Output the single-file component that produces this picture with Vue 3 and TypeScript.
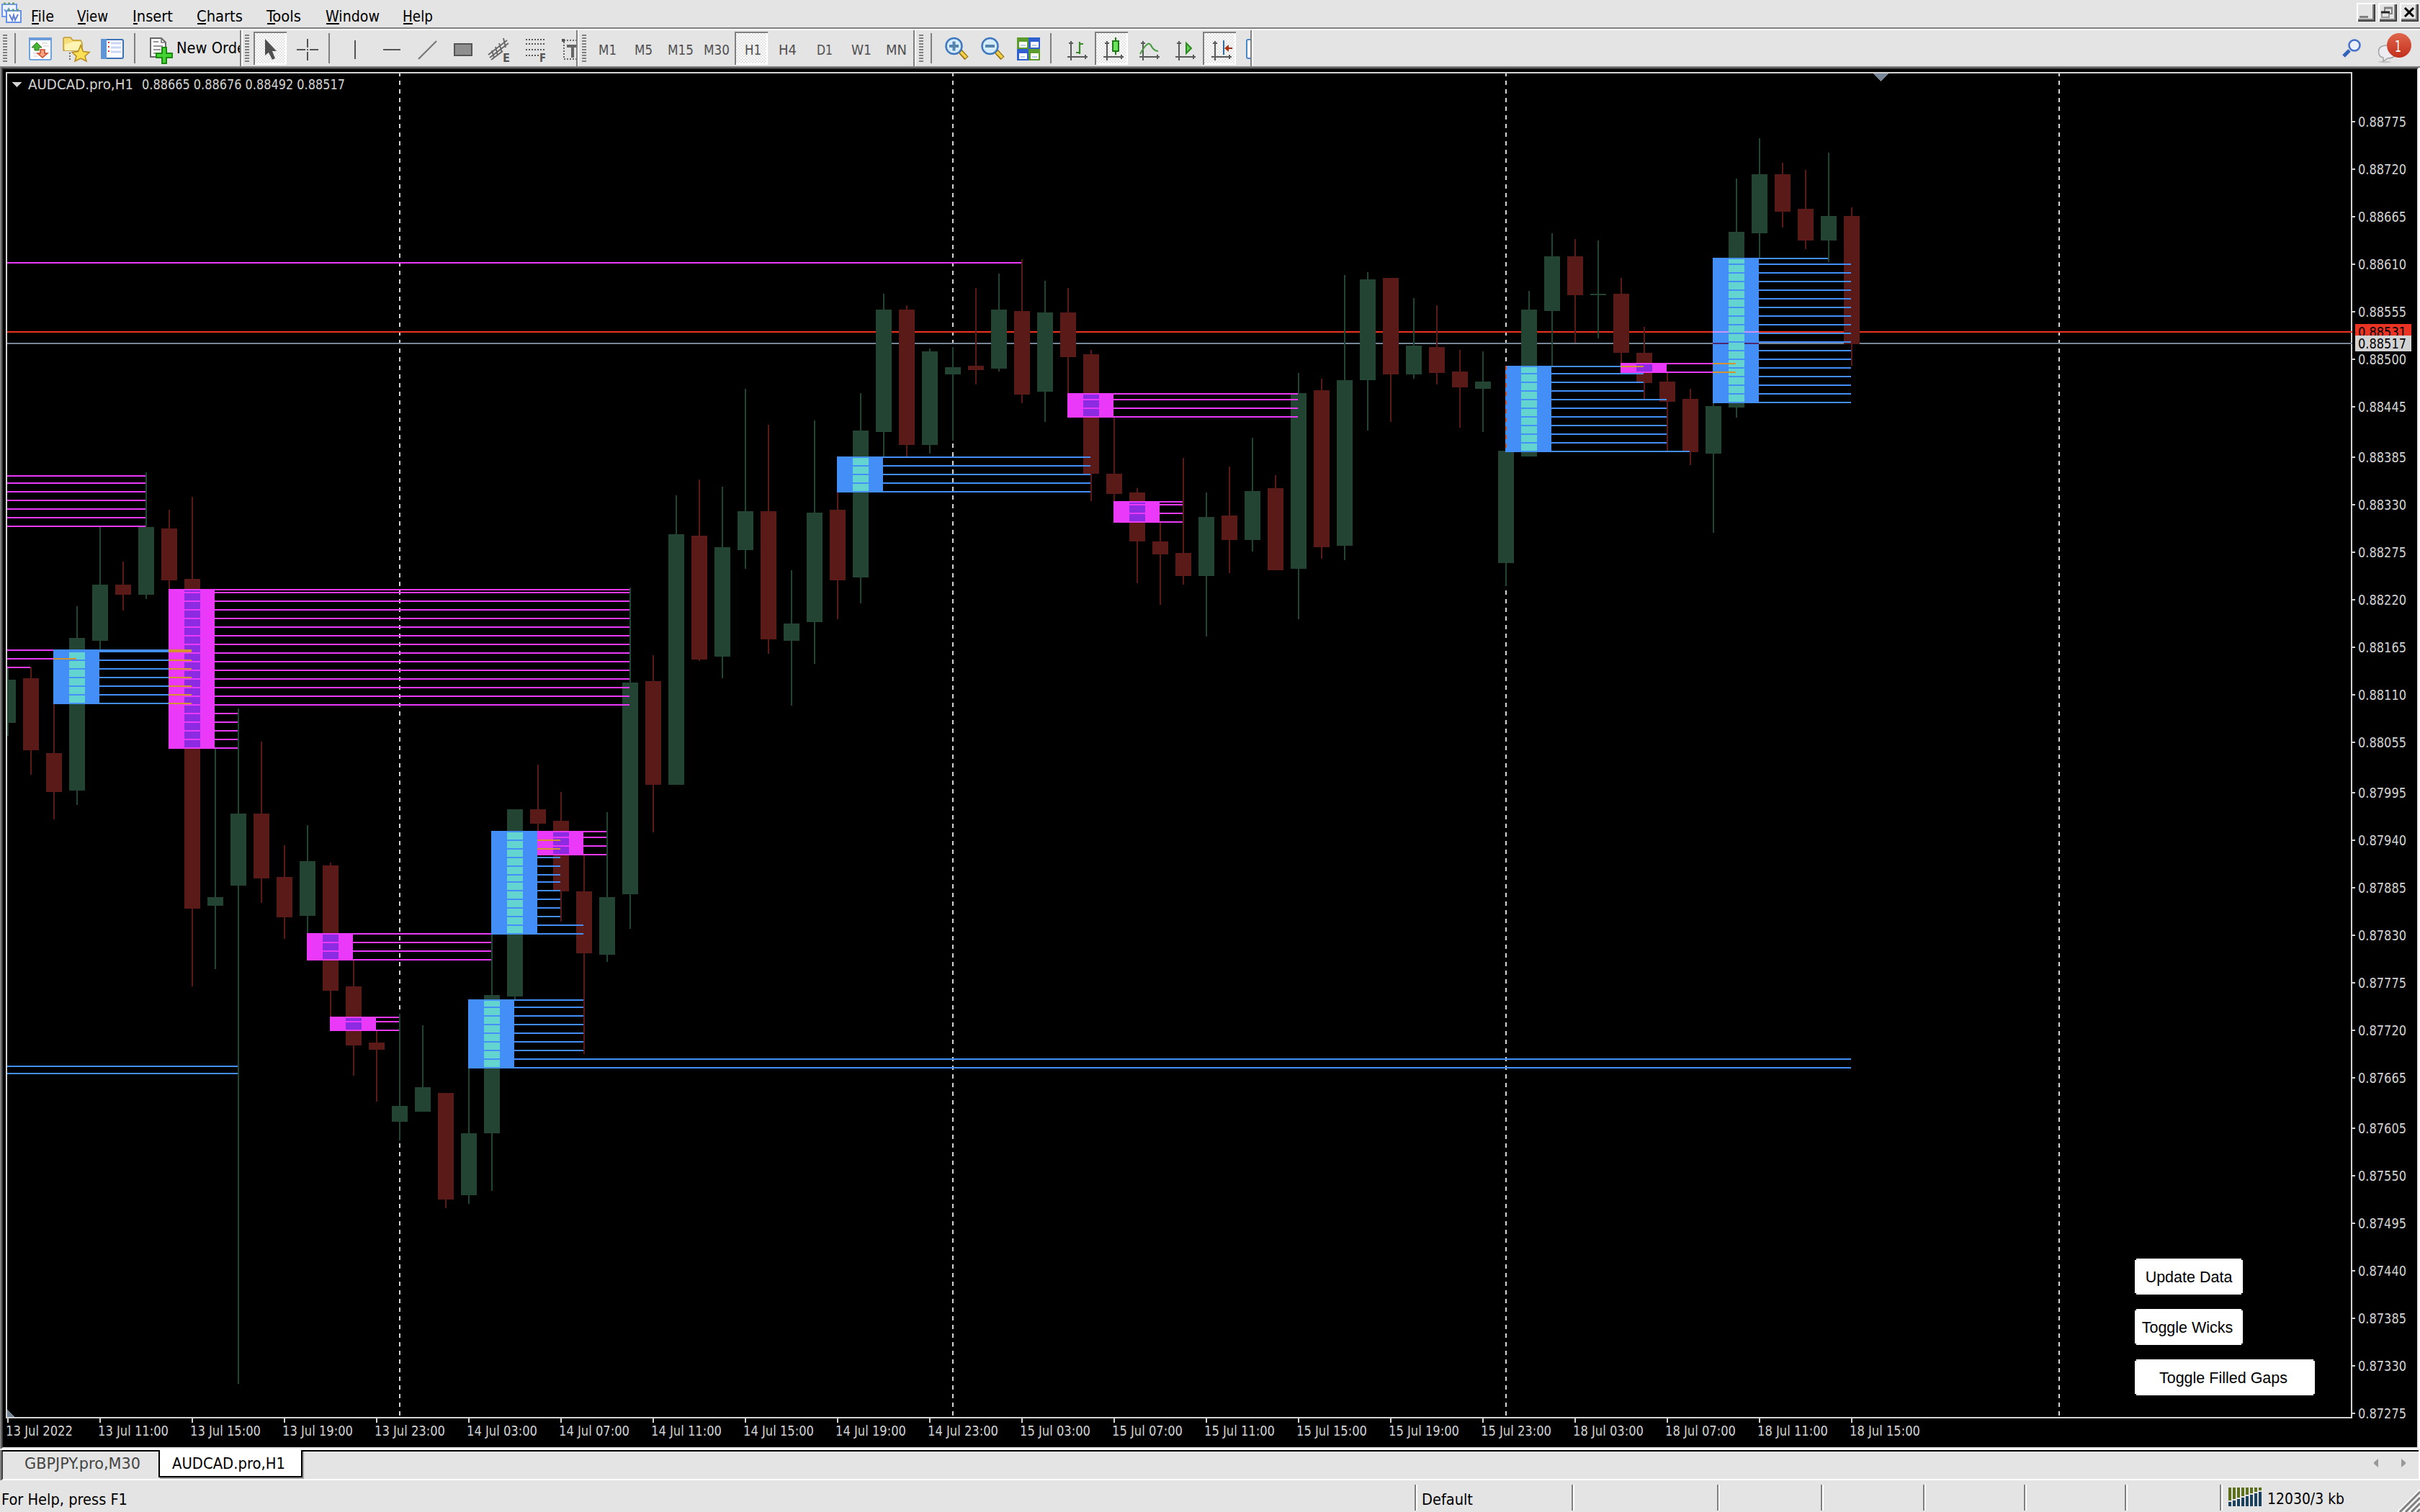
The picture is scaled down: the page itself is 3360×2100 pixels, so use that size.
<script setup lang="ts">
type Candle = [dir: 'g' | 'r', high: number, top: number, bottom: number, low: number]
type Tone = 'm' | 'b'
interface Gap { n: number; tone: Tone; top: number; bottom: number; levels: [y: number, end: number][] }

const GREEN = '#234433'
const RED = '#5a1a18'

const candles: Candle[] = [
  ['g', 928, 944, 1004, 1022], ['r', 926, 942, 1042, 1076], ['r', 978, 1046, 1100, 1138], ['g', 842, 886, 1098, 1118],
  ['g', 732, 812, 890, 904], ['r', 780, 812, 826, 848], ['g', 656, 732, 826, 832], ['r', 708, 734, 806, 818],
  ['r', 690, 804, 1262, 1370], ['g', 1040, 1246, 1258, 1346], ['g', 984, 1130, 1230, 1922], ['r', 1030, 1130, 1220, 1254],
  ['r', 1174, 1218, 1274, 1304], ['g', 1146, 1196, 1272, 1298], ['r', 1198, 1202, 1376, 1412], ['r', 1334, 1370, 1452, 1494],
  ['r', 1432, 1448, 1458, 1530], ['g', 1408, 1536, 1558, 1584], ['g', 1424, 1510, 1544, 1544], ['r', 1518, 1518, 1666, 1678],
  ['g', 1484, 1574, 1660, 1672], ['g', 1298, 1382, 1574, 1654], ['g', 1124, 1124, 1384, 1390], ['r', 1062, 1124, 1144, 1154],
  ['r', 1100, 1140, 1238, 1280], ['r', 1188, 1238, 1324, 1464], ['g', 1128, 1246, 1326, 1336], ['g', 816, 948, 1242, 1290],
  ['r', 910, 946, 1090, 1156], ['g', 688, 742, 1090, 1090], ['r', 666, 744, 916, 918], ['g', 676, 760, 912, 942],
  ['g', 540, 710, 764, 790], ['r', 590, 710, 888, 908], ['g', 792, 866, 890, 980], ['g', 584, 712, 864, 922],
  ['r', 684, 708, 806, 860], ['g', 546, 598, 802, 838], ['g', 408, 430, 600, 634], ['r', 424, 430, 618, 634],
  ['g', 484, 488, 618, 630], ['g', 482, 510, 520, 612], ['r', 400, 508, 514, 534], ['g', 380, 430, 512, 516],
  ['r', 360, 432, 548, 560], ['g', 390, 434, 544, 586], ['r', 400, 434, 496, 546], ['r', 486, 492, 658, 696],
  ['r', 580, 658, 686, 696], ['r', 678, 684, 752, 810], ['r', 726, 752, 770, 840], ['r', 636, 768, 800, 812],
  ['g', 684, 718, 800, 884], ['r', 648, 716, 750, 796], ['g', 608, 682, 750, 766], ['r', 660, 678, 792, 792],
  ['g', 518, 546, 790, 860], ['r', 526, 542, 760, 776], ['g', 382, 528, 758, 778], ['g', 378, 388, 528, 598],
  ['r', 386, 386, 520, 586], ['g', 414, 480, 520, 526], ['r', 424, 482, 518, 534], ['r', 486, 516, 538, 594],
  ['g', 488, 530, 540, 600], ['g', 626, 626, 782, 814], ['g', 404, 430, 634, 634], ['g', 324, 356, 432, 508],
  ['r', 332, 356, 410, 476], ['g', 334, 408, 410, 470], ['r', 386, 408, 490, 504], ['r', 454, 490, 532, 554],
  ['r', 518, 530, 558, 626], ['r', 540, 554, 628, 646], ['g', 560, 564, 630, 740], ['g', 248, 322, 566, 580],
  ['g', 192, 242, 324, 358], ['r', 226, 242, 294, 316], ['r', 236, 290, 334, 346], ['g', 212, 300, 334, 364],
  ['r', 288, 300, 478, 508],
]

const to = (ys: number[], end: number): [number, number][] => ys.map((y) => [y, end])

const gaps: Gap[] = [
  { n: 3, tone: 'b', top: 902, bottom: 978, levels: to([902, 904, 916, 928, 940, 952, 964, 976], 266) },
  { n: 8, tone: 'm', top: 818, bottom: 1040, levels: [...to([818, 822, 834, 846, 858, 870, 882, 894, 906, 918, 930, 942, 954, 966, 978], 874), ...to([990, 1002, 1014, 1026, 1038], 330)] },
  { n: 14, tone: 'm', top: 1296, bottom: 1334, levels: to([1296, 1308, 1320, 1332], 682) },
  { n: 15, tone: 'm', top: 1412, bottom: 1432, levels: to([1412, 1418, 1430], 554) },
  { n: 21, tone: 'b', top: 1388, bottom: 1484, levels: [...to([1388, 1398, 1410, 1422, 1434, 1446, 1458], 810), ...to([1470, 1482], 2570)] },
  { n: 22, tone: 'b', top: 1154, bottom: 1298, levels: [...to([1154, 1166, 1178, 1190, 1202, 1214, 1224, 1236, 1248, 1260, 1272], 778), ...to([1284, 1296], 810)] },
  { n: 24, tone: 'm', top: 1154, bottom: 1188, levels: to([1154, 1162, 1174, 1186], 842) },
  { n: 37, tone: 'b', top: 634, bottom: 684, levels: to([634, 646, 658, 670, 682], 1514) },
  { n: 47, tone: 'm', top: 546, bottom: 580, levels: to([546, 554, 566, 578], 1802) },
  { n: 49, tone: 'm', top: 696, bottom: 726, levels: to([696, 700, 712, 724], 1642) },
  { n: 66, tone: 'b', top: 508, bottom: 628, levels: [...to([508, 518, 530, 542], 2282), ...to([554, 566, 578, 590, 602, 614], 2314), [626, 2346]] },
  { n: 71, tone: 'm', top: 504, bottom: 518, levels: to([504, 516], 2410) },
  { n: 75, tone: 'b', top: 358, bottom: 560, levels: [[358, 2538], ...to([366, 378, 390, 402, 414, 426, 438, 450, 462, 474, 486, 498, 510, 522, 534, 546, 558], 2570)] },
]

// levels whose originating candle lies left of the visible range
const looseLevels: [Tone, number, number][] = [
  ['m', 364, 1418],
  ...[660, 670, 682, 694, 706, 718, 730].map((y): [Tone, number, number] => ['m', y, 202]),
  ['m', 902, 74], ['m', 914, 106], ['m', 926, 42], ['b', 1480, 330], ['b', 1490, 330],
]

// crossings of two zones are drawn inverted
type Crossing = [x: number, y: number, w: number, h: number, color: string]
const AMBER = '#d6922f'
const crossings: Crossing[] = [
  [74, 914, 32, 2, AMBER], [234, 902, 32, 4, AMBER],
  ...[916, 928, 940, 952, 964, 976].map((y): Crossing => [234, y, 32, 2, AMBER]),
  [746, 1166, 32, 2, AMBER], [746, 1178, 32, 2, AMBER],
  [2250, 508, 32, 2, AMBER], [2378, 504, 32, 2, AMBER], [2378, 516, 32, 2, AMBER],
  [2378, 460, 22, 2, '#cf93f5'], [2422, 460, 20, 2, '#cf93f5'],
  [2378, 476, 22, 2, '#50266f'], [2422, 476, 20, 2, '#50266f'],
]

const tone = { m: '#ea39f8', b: '#448ef8' }
const core = { m: '#8c2be2', b: '#63d4cf' }
const cx = (n: number) => 11 + 32 * n
const fill = (c: Candle) => (c[0] === 'g' ? GREEN : RED)

const sessions = [555, 1323, 2091, 2859]

const prices: [string, number][] = []
{
  let y = 169
  for (let p = 88775; p >= 87275;) {
    prices.push([`0.${p}`, y])
    const wide = p === 88445 || p === 88055 || p === 87665
    p -= wide ? 60 : 55
    y += wide ? 70 : 66
  }
}

const times: string[] = ['13 Jul 2022', '13 Jul 11:00', '13 Jul 15:00', '13 Jul 19:00', '13 Jul 23:00']
for (const day of ['14', '15', '18']) {
  for (const h of ['03', '07', '11', '15', '19', '23']) {
    if (times.length < 21) times.push(`${day} Jul ${h}:00`)
  }
}

const menu: [label: string, x: number, w: number, accel: number][] = [
  ['File', 43, 32, 10], ['View', 107, 43, 11], ['Insert', 184, 56, 6], ['Charts', 273, 64, 12],
  ['Tools', 370, 48, 11], ['Window', 452, 75, 18], ['Help', 559, 42, 13],
]
const menuCells = menu.map(([label, x, w, accel], i) => ({
  label, w, accel, gap: x - (i ? menu[i - 1][1] + menu[i - 1][2] : 32),
}))

const periods: [string, number, number][] = [
  ['M1', 831, 25], ['M5', 881, 25], ['M15', 927, 36], ['M30', 977, 36], ['H1', 1034, 23],
  ['H4', 1081, 25], ['D1', 1134, 22], ['W1', 1182, 28], ['MN', 1230, 29],
]

const bars = [0, 1, 2, 3, 4, 5, 6, 7]
const statusCells = [1966, 218, 202, 144, 142, 140, 140, 132]
</script>

<template>
  <div class="app">
    <header class="menubar">
      <svg class="menu-icon" width="32" height="38" viewBox="0 0 32 38">
        <rect x="3" y="6" width="20" height="17" fill="#eef3ff" stroke="#6f97ea" stroke-width="2" />
        <path d="M5 5h3M11 5h3M17 5h3" stroke="#69a07a" stroke-width="3" />
        <path d="M6 13l3 4 3-5 3 6 3-5" fill="none" stroke="#6f97ea" stroke-width="2" />
        <rect x="9" y="15" width="20" height="16" fill="#fff" stroke="#6590e8" stroke-width="2" />
        <path d="M11 14h3M17 14h3M23 14h3" stroke="#69a07a" stroke-width="3" />
        <path d="M13 20l4 8 2-7 2 7 4-8" fill="none" stroke="#5f7fd8" stroke-width="2" />
      </svg>
      <svg
        v-for="m in menuCells" :key="m.label" class="menu-item" :width="m.w" height="38"
        :style="{ marginLeft: m.gap + 'px' }"
      >
        <text x="0" y="30" class="t22" :textLength="m.w" lengthAdjust="spacingAndGlyphs">{{ m.label }}</text>
        <rect x="1" y="32" :width="m.accel" height="2" fill="#000" />
      </svg>
      <div class="win-buttons">
        <svg width="26" height="26"><rect x="4" y="18" width="12" height="3" fill="#808080" /></svg>
        <svg width="26" height="26">
          <path d="M9 12V7H19V15H16" fill="none" stroke="#808080" stroke-width="2" /><path d="M8 7H20" stroke="#808080" stroke-width="3" />
          <rect x="5" y="13" width="10" height="7" fill="none" stroke="#999" stroke-width="2" /><path d="M4 13H16" stroke="#222" stroke-width="3" />
        </svg>
        <svg width="26" height="26"><path d="M7 7L19 19M19 7L7 19" stroke="#000" stroke-width="3" /></svg>
      </div>
    </header>

    <div class="toolbar">
      <svg width="337" height="50" viewBox="0 42 337 50" class="band">
        <path d="M7 48V88" class="grip" />
        <path d="M21 46V88M187 46V88" class="sep" />
        <!-- market watch -->
        <rect x="41" y="53" width="30" height="30" rx="2" fill="#fff" stroke="#6fa3dd" stroke-width="2" />
        <rect x="40" y="52" width="32" height="4" fill="#6b9bd8" />
        <path d="M58 60h8M60 64h8M46 78h6M46 74h5" stroke="#ddd" stroke-width="1.5" />
        <path d="M51 59L58 66H54V70H48V66H44Z" fill="#46b533" stroke="#2a7d1c" />
        <path d="M59 80L66 74H62V69H56V74H52Z" fill="#f6a583" stroke="#cc4a28" stroke-width="1.500" />
        <!-- navigator -->
        <path d="M88 70V54Q88 52 90 52H98L101 56H112L114 60V70Z" fill="#f5de7a" stroke="#c0982f" stroke-width="1.5" />
        <path d="M90 62L101 58H113L110 70H90Z" fill="#fdf3b2" />
        <path d="M97 73V85" stroke="#444" stroke-width="1.5" stroke-dasharray="2 2" />
        <path d="M112 63L115.5 71.500L124 72.500L118 78L120 85L112 81L104 85L106 78L100 72.500L108.500 71.500Z" fill="#fbdf55" stroke="#b78a1b" stroke-width="1.500" />
        <!-- terminal -->
        <rect x="141" y="55" width="30" height="26" rx="2" fill="#fff" stroke="#3b73b8" stroke-width="2" />
        <rect x="140" y="54" width="8" height="28" fill="#5f95d4" />
        <path d="M154 60h14M154 66h14M154 72h14" stroke="#c9d5f5" stroke-width="3" />
        <path d="M151 58V76" stroke="#e03030" stroke-width="2" stroke-dasharray="2 4" />
        <!-- new order -->
        <path d="M209 53H224L230 59V79H209Z" fill="#fafafa" stroke="#666" stroke-width="2" />
        <path d="M224 53V59H230M213 58h7M213 64h13M213 69h10M213 74h6" fill="none" stroke="#777" stroke-width="1.600" />
        <path d="M225 66H231V74H239V80H231V88H225V80H217V74H225Z" fill="#45d233" stroke="#1d8a12" stroke-width="2" />
        <text x="245" y="74" class="t22" textLength="104" lengthAdjust="spacingAndGlyphs">New Order</text>
        <rect x="333" y="42" width="2" height="50" fill="#808080" /><rect x="335" y="42" width="2" height="50" fill="#fff" />
      </svg>

      <svg width="467" height="50" viewBox="337 42 467 50" class="band">
        <defs>
          <pattern id="chk" width="4" height="4" patternUnits="userSpaceOnUse">
            <rect width="4" height="4" fill="#e3e3e3" /><rect width="2" height="2" fill="#fff" /><rect x="2" y="2" width="2" height="2" fill="#fff" />
          </pattern>
        </defs>
        <path d="M343 48V88" class="grip" />
        <rect x="352" y="44" width="46" height="46" fill="#fff" /><path d="M352 90V44H398V46H354V90Z" fill="#808080" /><rect x="354" y="46" width="42" height="42" fill="url(#chk)" />
        <path d="M368 54V77L373 73L378 83L382 81L378 71H384Z" fill="#505050" />
        <path d="M427 54V66M427 72V84M412 69H424M430 69H442" stroke="#555" stroke-width="2" /><rect x="426" y="68" width="2" height="2" fill="#555" />
        <path d="M457 46V88" class="sep" />
        <path d="M493 56V82M532 69H556" stroke="#555" stroke-width="2" />
        <path d="M581 82L606 57" stroke="#777" stroke-width="2.200" />
        <rect x="631" y="61" width="24" height="16" fill="#8f8f8f" stroke="#555" stroke-width="2" />
        <path d="M678 76L704 56M680 80L706 60M682 83L698 71M683 70L686 80M688 65L691 77M693 60L697 73M699 53L702 66" stroke="#666" stroke-width="1.800" fill="none" />
        <text x="698" y="86" class="tiny" textLength="10" lengthAdjust="spacingAndGlyphs">E</text>
        <path d="M730 55H758M730 61H758M730 69H758M730 77H748" stroke="#555" stroke-width="2" stroke-dasharray="2 2" />
        <text x="749" y="86" class="tiny" textLength="9" lengthAdjust="spacingAndGlyphs">F</text>
        <path d="M783 56H806M783 82H806M783 58V82" fill="none" stroke="#666" stroke-width="2" stroke-dasharray="2 2" /><rect x="780" y="54" width="4" height="4" fill="#555" />
        <path d="M787 62H803V66H797V80H793V66H787Z" fill="#666" />
        <rect x="800" y="42" width="2" height="50" fill="#808080" /><rect x="802" y="42" width="2" height="50" fill="#fff" />
      </svg>

      <svg width="468" height="50" viewBox="804 42 468 50" class="band">
        <path d="M811 48V88" class="grip" />
        <rect x="1020" y="44" width="46" height="46" fill="#fff" /><path d="M1020 90V44H1066V46H1022V90Z" fill="#808080" /><rect x="1022" y="46" width="42" height="42" fill="url(#chk)" />
        <text
          v-for="p in periods" :key="p[0]" :x="p[1]" y="76" class="t19 dim" :textLength="p[2]" lengthAdjust="spacingAndGlyphs"
        >{{ p[0] }}</text>
        <rect x="1268" y="42" width="2" height="50" fill="#808080" /><rect x="1270" y="42" width="2" height="50" fill="#fff" />
      </svg>

      <svg width="468" height="50" viewBox="1272 42 468 50" class="band">
        <path d="M1279 48V88" class="grip" />
        <path d="M1293 46V88M1459 46V88" class="sep" />
        <g v-for="zx in [0, 50]" :key="zx" :transform="`translate(${zx} 0)`">
          <path d="M1333 71L1342 81" stroke="#9a7413" stroke-width="7" /><path d="M1334 72L1341.500 80" stroke="#f0cf4a" stroke-width="4" />
          <circle cx="1324.500" cy="64" r="11" fill="#d5ecfc" stroke="#3f78bd" stroke-width="2.500" />
          <path d="M1318 64H1331" stroke="#5585ae" stroke-width="4" />
          <path v-if="zx === 0" d="M1324.500 57.500V70.500" stroke="#5585ae" stroke-width="4" />
        </g>
        <path d="M1412 52h16v16h-16zM1428 68h16v16h-16z" fill="#5b9c2c" />
        <path d="M1428 52h16v16h-16zM1412 68h16v16h-16z" fill="#2f5fd0" />
        <path d="M1415 58h11v8h-11zM1431 58h11v8h-11zM1415 74h11v8h-11zM1431 74h11v8h-11z" fill="#fff" />
        <path d="M1417 63h7M1433 63h6M1417 79h6M1433 79h7" stroke="#b7cce8" stroke-width="2" />
        <rect x="1520" y="44" width="46" height="46" fill="#fff" /><path d="M1520 90V44H1566V46H1522V90Z" fill="#808080" /><rect x="1522" y="46" width="42" height="42" fill="url(#chk)" />
        <rect x="1670" y="44" width="46" height="46" fill="#fff" /><path d="M1670 90V44H1716V46H1672V90Z" fill="#808080" /><rect x="1672" y="46" width="42" height="42" fill="url(#chk)" />
        <g v-for="ax in [1482, 1532, 1582, 1632, 1682]" :key="ax" :transform="`translate(${ax} 0)`">
          <path d="M5 57V84M0 79H28M2 60H8M25 76V82" fill="none" stroke="#5a5a5a" stroke-width="2" />
        </g>
        <path d="M1499 58V75M1499 61H1504M1494 73H1499" stroke="#3a8a2a" stroke-width="2.200" fill="none" />
        <path d="M1549 52V76" stroke="#1f7a17" stroke-width="2" /><rect x="1545" y="57" width="8" height="14" fill="#6be35c" stroke="#1f7a17" stroke-width="2" />
        <path d="M1583 75Q1594 55 1598 63T1608 71" stroke="#4b9b42" stroke-width="2.200" fill="none" />
        <path d="M1647 60L1654 67L1647 74Z" fill="#68d058" stroke="#2c8a20" stroke-width="2" />
        <path d="M1699 56V76" stroke="#2f6ba3" stroke-width="2" /><path d="M1711 67H1704" stroke="#a12c12" stroke-width="2" /><path d="M1700 67L1706 62V72Z" fill="#b03414" />
        <rect x="1731" y="55" width="20" height="26" rx="2" fill="#fff" stroke="#4a85c9" stroke-width="2" />
        <rect x="1736" y="42" width="2" height="50" fill="#808080" /><rect x="1738" y="42" width="2" height="50" fill="#fff" />
        
      </svg>

      <svg width="120" height="50" viewBox="3240 42 120 50" class="band right">
        <defs>
          <linearGradient id="badge" x1="0" y1="0" x2="0" y2="1"><stop offset="0" stop-color="#e0664c" /><stop offset="1" stop-color="#c22f1c" /></linearGradient>
        </defs>
        <path d="M3262 70L3254 78" stroke="#3261b8" stroke-width="5" /><circle cx="3269" cy="63" r="7.500" fill="#eceffc" stroke="#4470cc" stroke-width="2.500" />
        <ellipse cx="3311" cy="86" rx="9" ry="1.500" fill="#c6c6c6" />
        <path d="M3313 63Q3302 64 3302.500 72Q3303 79 3309 80L3309 85L3315 81Q3324 81 3325 76V63Z" fill="#ececf2" stroke="#a2a2a2" stroke-width="1.500" />
        <circle cx="3331" cy="63" r="17" fill="url(#badge)" />
        <text x="3325" y="72" class="t22" fill="#fff" textLength="9" lengthAdjust="spacingAndGlyphs">1</text>
      </svg>
    </div>

    <main class="chart">
      <svg width="3352" height="1914" viewBox="4 96 3352 1914" shape-rendering="crispEdges">
        <path v-for="s in sessions" :key="s" :d="`M${s} 100V1968`" stroke="#d3d3d3" stroke-width="2" stroke-dasharray="6 6" />
        <rect x="10" y="460" width="3256" height="2" fill="#ea3323" />
        <rect x="10" y="476" width="3256" height="2" fill="#778797" />

        <g v-for="(c, i) in candles" :key="i" :fill="fill(c)">
          <rect :x="cx(i) - 1" :y="c[1]" width="2" :height="c[4] - c[1]" />
          <rect :x="cx(i) - 11" :y="c[2]" width="22" :height="c[3] - c[2]" />
        </g>

        <rect v-for="(l, i) in looseLevels" :key="'l' + i" x="10" :y="l[1]" :width="l[2] - 10" height="2" :fill="tone[l[0]]" />

        <g v-for="g in gaps" :key="'g' + g.n">
          <rect :x="cx(g.n - 1) - 1" :y="g.top" width="64" :height="g.bottom - g.top" :fill="tone[g.tone]" />
          <rect :x="cx(g.n) - 11" :y="g.top" width="22" :height="g.bottom - g.top" :fill="core[g.tone]" />
          <rect
            v-for="l in g.levels" :key="l[0]" :x="cx(g.n) - 11" :y="l[0]" :width="l[1] - cx(g.n) + 11"
            height="2" :fill="tone[g.tone]"
          />
        </g>
        <path d="M2091 508V626" stroke="#c4502f" stroke-width="2" stroke-dasharray="6 6" />
        <rect v-for="(x, i) in crossings" :key="'x' + i" :x="x[0]" :y="x[1]" :width="x[2]" :height="x[3]" :fill="x[4]" />

        <rect x="4" y="96" width="4" height="1914" fill="#000" />
        <path d="M8 100H3266V1970H8ZM10 102V1968H3264V102Z" fill="#d3d3d3" fill-rule="evenodd" />
        <rect x="3264" y="460" width="2" height="2" fill="#ea3323" /><rect x="3264" y="476" width="2" height="2" fill="#778797" />
        <path d="M10 1958V1968H20Z" fill="#778797" /><path d="M2600 102H2622L2611 113Z" fill="#778797" />

        <path d="M16 114H30L23 121Z" fill="#d3d3d3" />
        <g class="t19" fill="#d3d3d3">
          <text x="39" y="124" textLength="146" lengthAdjust="spacingAndGlyphs">AUDCAD.pro,H1</text>
          <text x="197" y="124" textLength="282" lengthAdjust="spacingAndGlyphs">0.88665 0.88676 0.88492 0.88517</text>
          <template v-for="p in prices" :key="p[0]">
            <rect x="3266" :y="p[1] - 1" width="4" height="2" />
            <text x="3274" :y="p[1] + 7" textLength="67" lengthAdjust="spacingAndGlyphs">{{ p[0] }}</text>
          </template>
          <template v-for="(t, i) in times" :key="t">
            <rect :x="10 + 128 * i" y="1970" width="2" height="6" />
            <text :x="8 + 128 * i" y="1994" :textLength="i ? 98 : 93" lengthAdjust="spacingAndGlyphs">{{ t }}</text>
          </template>
        </g>
        <rect x="3270" y="450" width="78" height="16" fill="#ea3323" />
        <text x="3274" y="468" class="t19" textLength="67" lengthAdjust="spacingAndGlyphs">0.88531</text>
        <rect x="3270" y="466" width="78" height="22" fill="#d3d3d3" />
        <text x="3274" y="484" class="t19" textLength="67" lengthAdjust="spacingAndGlyphs">0.88517</text>
      </svg>
      <div class="actions">
        <button>Update Data</button>
        <button class="wicks">Toggle Wicks</button>
        <button class="wide">Toggle Filled Gaps</button>
      </div>
    </main>

    <nav class="tabs">
      <div class="tab">
        <svg width="216" height="38"><text x="30" y="24" class="t22 dim2" textLength="161" lengthAdjust="spacingAndGlyphs">GBPJPY.pro,M30</text></svg>
      </div>
      <div class="tab active">
        <svg width="196" height="36"><text x="17" y="26" class="t22" textLength="157" lengthAdjust="spacingAndGlyphs">AUDCAD.pro,H1</text></svg>
      </div>
      <svg class="tab-arrows" width="44" height="12"><path d="M6 0V12L0 7V5ZM38 0V12L44 7V5Z" fill="#999" /></svg>
    </nav>

    <footer class="status">
      <div v-for="(w, i) in statusCells" :key="i" class="cell" :style="{ width: w + 'px' }">
        <svg v-if="i === 0" width="200" height="44"><text x="2" y="34" class="t22" textLength="175" lengthAdjust="spacingAndGlyphs">For Help, press F1</text></svg>
        <svg v-if="i === 1" width="100" height="44"><text x="8" y="34" class="t22" textLength="71" lengthAdjust="spacingAndGlyphs">Default</text></svg>
      </div>
      <svg width="274" height="44" viewBox="3086 2056 274 44" class="link">
        <g v-for="b in bars" :key="b">
          <rect :x="3094 + 6 * b" y="2066" width="4" :height="18 - 2 * b" fill="#5c701c" />
          <rect :x="3094 + 6 * b" :y="2086 - 2 * b" width="4" :height="6 + 2 * b" fill="#1b415c" />
        </g>
        <text x="3148" y="2089" class="t22" textLength="107" lengthAdjust="spacingAndGlyphs">12030/3 kb</text>
        <path d="M3329 2100L3360 2069M3337 2100L3360 2077M3345 2100L3360 2085M3353 2100L3360 2093" stroke="#fff" stroke-width="2" />
        <path d="M3332 2100L3360 2072M3340 2100L3360 2080M3348 2100L3360 2088M3356 2100L3360 2096" stroke="#808080" stroke-width="3" />
      </svg>
    </footer>
  </div>
</template>

<style>
body { margin: 0; background: #e4e4e4; }
</style>

<style scoped>
.app { width: 3360px; height: 2100px; display: flex; flex-direction: column; background: #e4e4e4; overflow: hidden; }
svg { display: block; flex: none; }
.t22, .t19, .tiny { font-family: "DejaVu Sans Condensed", "DejaVu Sans", sans-serif; font-stretch: condensed; white-space: pre; }
.t22 { font-size: 21.5px; }
.t19 { font-size: 19px; }
.tiny { font-size: 16px; font-weight: bold; fill: #555; }
.dim { fill: #505050; }
.dim2 { fill: #444; }
.menubar { height: 38px; display: flex; border-bottom: 2px solid #808080; box-sizing: content-box; }
.menu-item { overflow: visible; }
.win-buttons { margin: 4px 2px 0 auto; display: flex; gap: 4px; }
.win-buttons svg { box-shadow: inset 2px 2px #fff, inset -2px -2px #404040, inset -4px -4px #808080; }
.toolbar { height: 50px; display: flex; border-top: 2px solid #fff; border-bottom: 2px solid #808080; }
.band { overflow: hidden; }
.right { margin-left: auto; }
.grip { stroke: #808080; stroke-width: 6; stroke-dasharray: 2 2; fill: none; }
.sep { stroke: #808080; stroke-width: 2; fill: none; }
.chart {
  position: relative; height: 1914px; width: 3352px; background: #000;
  border-top: 2px solid #404040; border-left: 2px solid #404040; border-right: 2px solid #e4e4e4; border-bottom: 2px solid #e4e4e4;
  box-shadow: -2px 0 #808080, 2px 0 #fff, 0 2px #fff; margin-left: 2px;
}
.actions { position: absolute; left: 2960px; top: 1652px; display: flex; flex-direction: column; gap: 20px; }
.actions button {
  width: 150px; height: 50px; padding: 2px 0 0; border: 0; background: #fff; color: #000;
  font: 21.5px/48px "Liberation Sans", Arial, sans-serif; white-space: nowrap; text-align: center;
  clip-path: polygon(2px 0, calc(100% - 2px) 0, calc(100% - 2px) 2px, 100% 2px, 100% calc(100% - 2px), calc(100% - 2px) calc(100% - 2px), calc(100% - 2px) 100%, 2px 100%, 2px calc(100% - 2px), 0 calc(100% - 2px), 0 2px, 2px 2px);
}
.actions .wicks { padding-right: 4px; }
.actions .wide { width: 250px; padding-right: 4px; }
.tabs { margin-top: 2px; height: 38px; width: 3354px; display: flex; border-top: 2px solid #000; border-left: 2px solid #404040; margin-left: 2px; border-bottom: 2px solid #fff; box-shadow: -2px 0 #808080, 2px 0 #fff; }
.tab.active { height: 36px; margin-top: -2px; background: #fff; border: 2px solid #000; border-top: 0; box-shadow: 2px 2px #a0a0a0; }
.tab-arrows { margin: 10px 18px 0 auto; }
.status { height: 44px; display: flex; }
.cell { flex: none; height: 36px; margin-top: 6px; box-sizing: border-box; border-right: 2px solid #808080; box-shadow: 2px 0 #fff; }
.cell svg { margin-top: -6px; }
.link { margin-left: auto; }
</style>
